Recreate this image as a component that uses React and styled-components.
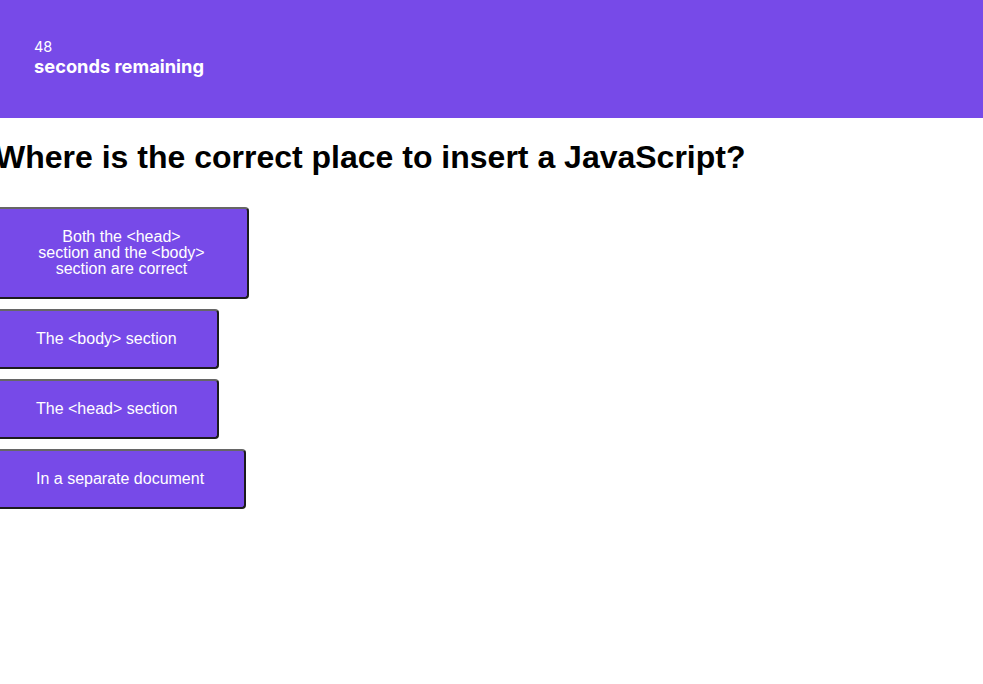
import React from "react";
import styled, { createGlobalStyle } from "styled-components";

const GlobalStyle = createGlobalStyle`
  body {
    margin: 0;
    background: #ffffff;
    font-family: "Liberation Sans", Arial, sans-serif;
  }
`;

const Header = styled.header`
  background: #774ae8;
  height: 118px;
  box-sizing: border-box;
  padding: 38px 34px 0;
  color: white;
  font-family: Inter, "Noto Sans", sans-serif;
`;

const Seconds = styled.div`
  font-size: 14.5px;
  line-height: 17px;
`;

const Label = styled.div`
  font-size: 18.3px;
  font-weight: 700;
  line-height: 23px;
`;

const Question = styled.h1`
  margin: 21px 0 0 -5px;
  font-size: 32px;
  line-height: 37px;
  font-weight: 700;
  color: #000;
`;

const Answers = styled.div`
  display: flex;
  flex-direction: column;
  align-items: flex-start;
  gap: 10px;
  margin: 31px 0 0 -6px;
`;

const Answer = styled.button`
  box-sizing: border-box;
  max-width: 255px;
  padding: 20px 40px;
  background: #774ae8;
  color: white;
  font-family: "Liberation Sans", Arial, sans-serif;
  font-size: 16px;
  line-height: 16px;
  text-align: center;
  border: 2px solid;
  border-color: #666666 #1c1c1c #1c1c1c #666666;
  border-radius: 4px;
  cursor: pointer;

  &:hover {
    opacity: 0.9;
  }
`;

const answers = [
  "Both the <head> section and the <body> section are correct",
  "The <body> section",
  "The <head> section",
  "In a separate document",
];

export default function App() {
  return (
    <>
      <GlobalStyle />
      <Header>
        <Seconds>48</Seconds>
        <Label>seconds remaining</Label>
      </Header>
      <Question>Where is the correct place to insert a JavaScript?</Question>
      <Answers>
        {answers.map((a) => (
          <Answer key={a}>{a}</Answer>
        ))}
      </Answers>
    </>
  );
}
